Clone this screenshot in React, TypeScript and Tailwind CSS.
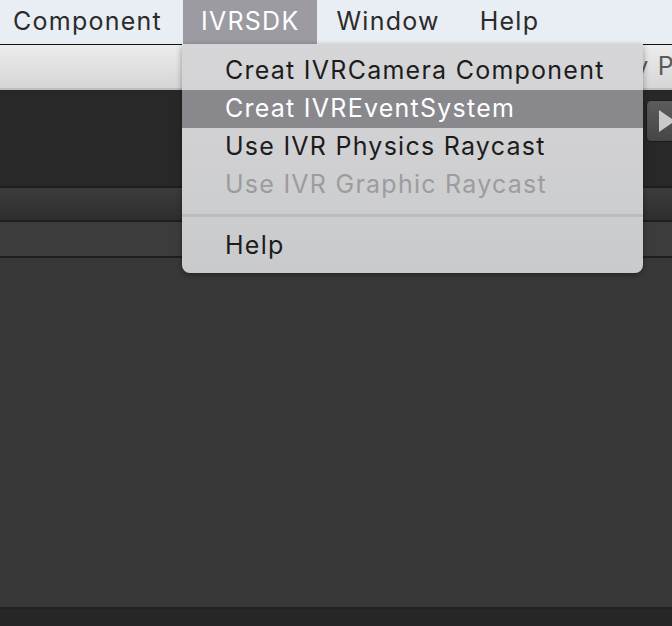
const font = { fontFamily: "Inter, 'Open Sans', sans-serif" };

const items = [
  { label: "Creat IVRCamera Component" },
  { label: "Creat IVREventSystem", active: true },
  { label: "Use IVR Physics Raycast" },
  { label: "Use IVR Graphic Raycast", disabled: true },
];

export default function App() {
  return (
    <div className="relative w-[672px] h-[626px] overflow-hidden flex flex-col bg-[#383838]" style={font}>
      {/* menu bar */}
      <div className="h-[44px] shrink-0 bg-[#e9edf4] flex items-stretch text-[25px] tracking-[0.05em] text-[#2b2b2b]">
        <div className="flex items-center pl-[13px] pr-[21px]">Component</div>
        <div className="flex items-center px-[18px] bg-[#9b9ba1] text-white">IVRSDK</div>
        <div className="flex items-center pl-[19px] pr-[18px]">Window</div>
        <div className="flex items-center px-[22px]">Help</div>
      </div>

      {/* toolbar */}
      <div className="h-[46px] shrink-0 border-t border-[#111] border-b-2 border-b-[#bdbdbd] bg-gradient-to-b from-[#ececec] to-[#d6d6d6] flex items-center">
        <div className="ml-[643px] w-[29px] overflow-hidden flex justify-end">
          <div className="-mr-[3px] text-[25px] tracking-[0.05em] text-[#5a5a5a] whitespace-nowrap">y P</div>
        </div>
      </div>

      {/* dark toolbar area */}
      <div className="h-[96px] shrink-0 bg-[#282828] flex justify-end items-start pt-[10px]">
        <div className="w-[30px] h-[42px] -mr-[4px] rounded-[5px] border border-[#1c1c1c] bg-gradient-to-b from-[#5c5c5c] to-[#464646] flex items-center pl-[12px]">
          <div className="w-0 h-0 border-y-[11px] border-y-transparent border-l-[16px] border-l-[#c9c9c9]" />
        </div>
      </div>

      {/* panel header */}
      <div className="h-[2px] shrink-0 bg-[#1d1d1d]" />
      <div className="h-[32px] shrink-0 bg-gradient-to-b from-[#3c3c3c] to-[#2e2e2e]" />
      <div className="h-[2px] shrink-0 bg-[#1f1f1f]" />
      <div className="h-[34px] shrink-0 bg-[#3c3c3c]" />
      <div className="h-[2px] shrink-0 bg-[#1f1f1f]" />

      {/* body */}
      <div className="flex-1 bg-[#383838]" />
      <div className="h-[2px] shrink-0 bg-[#222]" />
      <div className="h-[17px] shrink-0 bg-[#262626]" />

      {/* dropdown */}
      <div className="absolute left-[182px] top-[44px] w-[461px] h-[229px] rounded-b-[8px] bg-gradient-to-b from-[#d6d6d8] to-[#c9cacc] shadow-[0_2px_6px_rgba(0,0,0,0.35)] pt-[8px] text-[25px] tracking-[0.05em]">
        {items.map((it) => (
          <div
            key={it.label}
            className={
              "h-[38px] flex items-center pl-[43px] " +
              (it.active ? "bg-[#88888d] text-white" : it.disabled ? "text-[#9c9c9e]" : "text-[#1c1c1c]")
            }
          >
            {it.label}
          </div>
        ))}
        <div className="h-[10px]" />
        <div className="h-[3px] bg-[#bcbcbe]" />
        <div className="h-[10px]" />
        <div className="h-[38px] flex items-center pl-[43px] text-[#1c1c1c]">Help</div>
      </div>
    </div>
  );
}
